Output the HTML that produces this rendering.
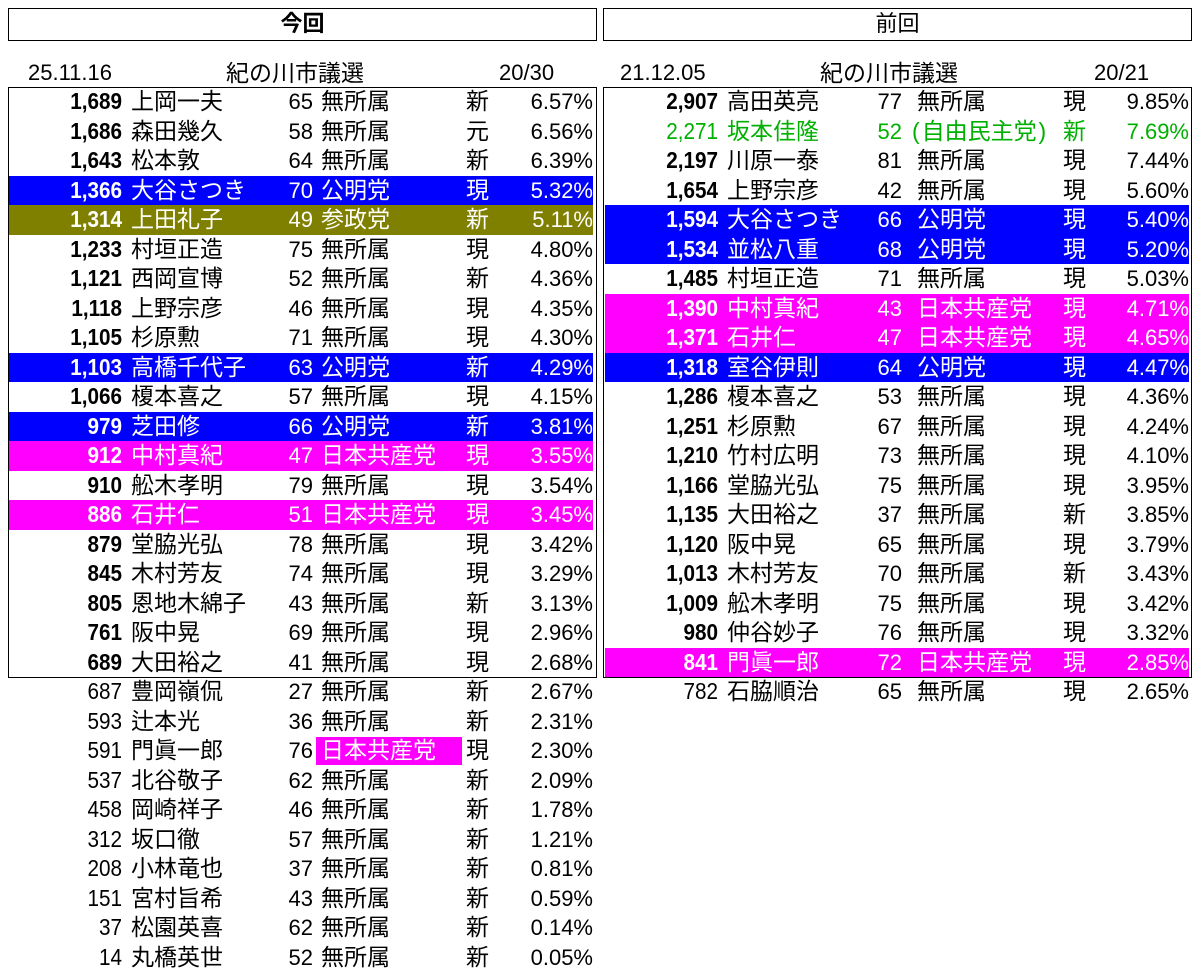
<!DOCTYPE html>
<html><head><meta charset="utf-8">
<style>
body{margin:0;width:1200px;height:980px;background:#fff;position:relative;overflow:hidden;font-family:"Liberation Sans","Noto Sans CJK JP",sans-serif;color:#000}
.box{position:absolute;border:1.5px solid #000;box-sizing:border-box}
.hd{position:absolute;font-size:22px;line-height:30px;top:58px}
.hd.j{font-size:23px}
.t{position:absolute;top:87px;width:600px}
.r{position:relative;height:29.5px;font-size:23px;line-height:29.5px;white-space:nowrap}
.r span{position:absolute;top:0}
.v{left:0;width:122px;text-align:right;font-weight:bold;transform:scaleX(.9);transform-origin:right center}
.n{left:131px}
.a{left:263px;width:50px;text-align:right;font-size:22px}
.p{left:321px}
.s{left:466px}
.c{left:490px;width:103px;text-align:right;font-size:22px}
.nb .v{font-weight:normal}
.B{background:#0000ff;color:#fff}
.O{background:#808000;color:#fff}
.M{background:#ff00ff;color:#fff}
.G{color:#00b000}
.R .a{left:256px}
.R .p{left:321px}
.R .s{left:467px}
.h .v,.h .n,.h .a,.h .p,.h .s,.h .c{margin-left:-9px}
.h{margin-left:9px;margin-right:7px}
</style></head><body>
<div class="box" style="left:8px;top:8px;width:589px;height:33px;text-align:center;font-weight:bold;font-size:22px;line-height:30px">今回</div>
<div class="box" style="left:603px;top:8px;width:589px;height:33px;text-align:center;font-size:22px;line-height:30px">前回</div>
<div class="hd" style="left:28px">25.11.16</div>
<div class="hd j" style="left:226px">紀の川市議選</div>
<div class="hd" style="left:499px">20/30</div>
<div class="hd" style="left:620px">21.12.05</div>
<div class="hd j" style="left:820px">紀の川市議選</div>
<div class="hd" style="left:1094px">20/21</div>
<div class="box" style="left:8px;top:87px;width:589px;height:591px"></div>
<div class="box" style="left:603px;top:87px;width:589px;height:591px"></div>

<div class="t" style="left:0">
<div class="r"><span class="v">1,689</span><span class="n">上岡一夫</span><span class="a">65</span><span class="p">無所属</span><span class="s">新</span><span class="c">6.57%</span></div>
<div class="r"><span class="v">1,686</span><span class="n">森田幾久</span><span class="a">58</span><span class="p">無所属</span><span class="s">元</span><span class="c">6.56%</span></div>
<div class="r"><span class="v">1,643</span><span class="n">松本敦</span><span class="a">64</span><span class="p">無所属</span><span class="s">新</span><span class="c">6.39%</span></div>
<div class="r B h"><span class="v">1,366</span><span class="n">大谷さつき</span><span class="a">70</span><span class="p">公明党</span><span class="s">現</span><span class="c">5.32%</span></div>
<div class="r O h"><span class="v">1,314</span><span class="n">上田礼子</span><span class="a">49</span><span class="p">参政党</span><span class="s">新</span><span class="c">5.11%</span></div>
<div class="r"><span class="v">1,233</span><span class="n">村垣正造</span><span class="a">75</span><span class="p">無所属</span><span class="s">現</span><span class="c">4.80%</span></div>
<div class="r"><span class="v">1,121</span><span class="n">西岡宣博</span><span class="a">52</span><span class="p">無所属</span><span class="s">新</span><span class="c">4.36%</span></div>
<div class="r"><span class="v">1,118</span><span class="n">上野宗彦</span><span class="a">46</span><span class="p">無所属</span><span class="s">現</span><span class="c">4.35%</span></div>
<div class="r"><span class="v">1,105</span><span class="n">杉原勲</span><span class="a">71</span><span class="p">無所属</span><span class="s">現</span><span class="c">4.30%</span></div>
<div class="r B h"><span class="v">1,103</span><span class="n">高橋千代子</span><span class="a">63</span><span class="p">公明党</span><span class="s">新</span><span class="c">4.29%</span></div>
<div class="r"><span class="v">1,066</span><span class="n">榎本喜之</span><span class="a">57</span><span class="p">無所属</span><span class="s">現</span><span class="c">4.15%</span></div>
<div class="r B h"><span class="v">979</span><span class="n">芝田修</span><span class="a">66</span><span class="p">公明党</span><span class="s">新</span><span class="c">3.81%</span></div>
<div class="r M h"><span class="v">912</span><span class="n">中村真紀</span><span class="a">47</span><span class="p">日本共産党</span><span class="s">現</span><span class="c">3.55%</span></div>
<div class="r"><span class="v">910</span><span class="n">舩木孝明</span><span class="a">79</span><span class="p">無所属</span><span class="s">現</span><span class="c">3.54%</span></div>
<div class="r M h"><span class="v">886</span><span class="n">石井仁</span><span class="a">51</span><span class="p">日本共産党</span><span class="s">現</span><span class="c">3.45%</span></div>
<div class="r"><span class="v">879</span><span class="n">堂脇光弘</span><span class="a">78</span><span class="p">無所属</span><span class="s">現</span><span class="c">3.42%</span></div>
<div class="r"><span class="v">845</span><span class="n">木村芳友</span><span class="a">74</span><span class="p">無所属</span><span class="s">現</span><span class="c">3.29%</span></div>
<div class="r"><span class="v">805</span><span class="n">恩地木綿子</span><span class="a">43</span><span class="p">無所属</span><span class="s">新</span><span class="c">3.13%</span></div>
<div class="r"><span class="v">761</span><span class="n">阪中晃</span><span class="a">69</span><span class="p">無所属</span><span class="s">現</span><span class="c">2.96%</span></div>
<div class="r"><span class="v">689</span><span class="n">大田裕之</span><span class="a">41</span><span class="p">無所属</span><span class="s">現</span><span class="c">2.68%</span></div>
<div class="r nb"><span class="v">687</span><span class="n">豊岡嶺侃</span><span class="a">27</span><span class="p">無所属</span><span class="s">新</span><span class="c">2.67%</span></div>
<div class="r nb"><span class="v">593</span><span class="n">辻本光</span><span class="a">36</span><span class="p">無所属</span><span class="s">新</span><span class="c">2.31%</span></div>
<div class="r nb"><span class="v">591</span><span class="n">門眞一郎</span><span class="a">76</span><span class="p M" style="left:316px;width:141px;padding-left:5px;height:28px;top:1px;line-height:27px">日本共産党</span><span class="s">現</span><span class="c">2.30%</span></div>
<div class="r nb"><span class="v">537</span><span class="n">北谷敬子</span><span class="a">62</span><span class="p">無所属</span><span class="s">新</span><span class="c">2.09%</span></div>
<div class="r nb"><span class="v">458</span><span class="n">岡崎祥子</span><span class="a">46</span><span class="p">無所属</span><span class="s">新</span><span class="c">1.78%</span></div>
<div class="r nb"><span class="v">312</span><span class="n">坂口徹</span><span class="a">57</span><span class="p">無所属</span><span class="s">新</span><span class="c">1.21%</span></div>
<div class="r nb"><span class="v">208</span><span class="n">小林竜也</span><span class="a">37</span><span class="p">無所属</span><span class="s">新</span><span class="c">0.81%</span></div>
<div class="r nb"><span class="v">151</span><span class="n">宮村旨希</span><span class="a">43</span><span class="p">無所属</span><span class="s">新</span><span class="c">0.59%</span></div>
<div class="r nb"><span class="v">37</span><span class="n">松園英喜</span><span class="a">62</span><span class="p">無所属</span><span class="s">新</span><span class="c">0.14%</span></div>
<div class="r nb"><span class="v">14</span><span class="n">丸橋英世</span><span class="a">52</span><span class="p">無所属</span><span class="s">新</span><span class="c">0.05%</span></div>
</div>

<div class="t R" style="left:596px">
<div class="r"><span class="v">2,907</span><span class="n">高田英亮</span><span class="a">77</span><span class="p">無所属</span><span class="s">現</span><span class="c">9.85%</span></div>
<div class="r G"><span class="v" style="font-weight:normal">2,271</span><span class="n">坂本佳隆</span><span class="a">52</span><span class="p" style="left:316px">(&#8202;自由民主党&#8202;)</span><span class="s">新</span><span class="c">7.69%</span></div>
<div class="r"><span class="v">2,197</span><span class="n">川原一泰</span><span class="a">81</span><span class="p">無所属</span><span class="s">現</span><span class="c">7.44%</span></div>
<div class="r"><span class="v">1,654</span><span class="n">上野宗彦</span><span class="a">42</span><span class="p">無所属</span><span class="s">現</span><span class="c">5.60%</span></div>
<div class="r B h"><span class="v">1,594</span><span class="n">大谷さつき</span><span class="a">66</span><span class="p">公明党</span><span class="s">現</span><span class="c">5.40%</span></div>
<div class="r B h"><span class="v">1,534</span><span class="n">並松八重</span><span class="a">68</span><span class="p">公明党</span><span class="s">現</span><span class="c">5.20%</span></div>
<div class="r"><span class="v">1,485</span><span class="n">村垣正造</span><span class="a">71</span><span class="p">無所属</span><span class="s">現</span><span class="c">5.03%</span></div>
<div class="r M h"><span class="v">1,390</span><span class="n">中村真紀</span><span class="a">43</span><span class="p">日本共産党</span><span class="s">現</span><span class="c">4.71%</span></div>
<div class="r M h"><span class="v">1,371</span><span class="n">石井仁</span><span class="a">47</span><span class="p">日本共産党</span><span class="s">現</span><span class="c">4.65%</span></div>
<div class="r B h"><span class="v">1,318</span><span class="n">室谷伊則</span><span class="a">64</span><span class="p">公明党</span><span class="s">現</span><span class="c">4.47%</span></div>
<div class="r"><span class="v">1,286</span><span class="n">榎本喜之</span><span class="a">53</span><span class="p">無所属</span><span class="s">現</span><span class="c">4.36%</span></div>
<div class="r"><span class="v">1,251</span><span class="n">杉原勲</span><span class="a">67</span><span class="p">無所属</span><span class="s">現</span><span class="c">4.24%</span></div>
<div class="r"><span class="v">1,210</span><span class="n">竹村広明</span><span class="a">73</span><span class="p">無所属</span><span class="s">現</span><span class="c">4.10%</span></div>
<div class="r"><span class="v">1,166</span><span class="n">堂脇光弘</span><span class="a">75</span><span class="p">無所属</span><span class="s">現</span><span class="c">3.95%</span></div>
<div class="r"><span class="v">1,135</span><span class="n">大田裕之</span><span class="a">37</span><span class="p">無所属</span><span class="s">新</span><span class="c">3.85%</span></div>
<div class="r"><span class="v">1,120</span><span class="n">阪中晃</span><span class="a">65</span><span class="p">無所属</span><span class="s">現</span><span class="c">3.79%</span></div>
<div class="r"><span class="v">1,013</span><span class="n">木村芳友</span><span class="a">70</span><span class="p">無所属</span><span class="s">新</span><span class="c">3.43%</span></div>
<div class="r"><span class="v">1,009</span><span class="n">舩木孝明</span><span class="a">75</span><span class="p">無所属</span><span class="s">現</span><span class="c">3.42%</span></div>
<div class="r"><span class="v">980</span><span class="n">仲谷妙子</span><span class="a">76</span><span class="p">無所属</span><span class="s">現</span><span class="c">3.32%</span></div>
<div class="r M h"><span class="v">841</span><span class="n">門眞一郎</span><span class="a">72</span><span class="p">日本共産党</span><span class="s">現</span><span class="c">2.85%</span></div>
<div class="r nb"><span class="v">782</span><span class="n">石脇順治</span><span class="a">65</span><span class="p">無所属</span><span class="s">現</span><span class="c">2.65%</span></div>
</div>
</body></html>
